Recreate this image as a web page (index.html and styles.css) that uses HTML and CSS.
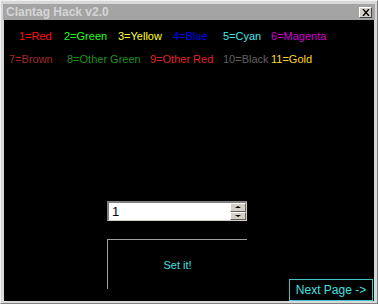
FILE: index.html
```html
<!DOCTYPE html>
<html lang="en">

<head>
    <meta charset="UTF-8">
    <title>Clantag Hack v2.0</title>
    <link rel="stylesheet" href="styles.css">
</head>

<body>
    <div class="window">
        <div class="title-bar">
            <span class="title">Clantag Hack v2.0</span>
            <span class="close-btn">
                <svg width="8" height="7" viewBox="0 0 8 7">
                    <path d="M1 0 L7 7 M7 0 L1 7" stroke="#000" stroke-width="1.4" />
                </svg>
            </span>
        </div>
        <div class="client">
            <div class="colors row-one">
                <span class="red">1=Red</span>
                <span class="green">2=Green</span>
                <span class="yellow">3=Yellow</span>
                <span class="blue">4=Blue</span>
                <span class="cyan">5=Cyan</span>
                <span class="magenta">6=Magenta</span>
            </div>
            <div class="colors row-two">
                <span class="brown">7=Brown</span>
                <span class="other-green">8=Other Green</span>
                <span class="other-red">9=Other Red</span>
                <span class="black">10=Black</span>
                <span class="gold">11=Gold</span>
            </div>

            <div class="spin-box">
                <span class="spin-value">1</span>
                <div class="spin-buttons">
                    <span class="spin-btn"><span class="arrow-up"></span></span>
                    <span class="spin-btn"><span class="arrow-down"></span></span>
                </div>
            </div>

            <div class="bottom-row">
                <div class="group-box">
                    <span class="set-it">Set it!</span>
                </div>
                <button class="next-btn">Next Page -&gt;</button>
            </div>
        </div>
    </div>
</body>

</html>
```

FILE: styles.css
```css
body {
    margin: 0;
    background-color: #d4d0c8;
    font-family: "Liberation Sans", Arial, sans-serif;
    font-size: 11px;
}

.window {
    width: 378px;
    height: 304px;
    box-sizing: border-box;
    padding: 3px 3px 2px 3px;
    background-color: #d8d8d8;
    border-top: 1px solid #f0f0f0;
    border-left: 1px solid #f0f0f0;
    border-right: 1px solid #808080;
    border-bottom: 1px solid #808080;
    display: flex;
    flex-direction: column;
}

.title-bar {
    height: 17px;
    margin-left: -1px;
    margin-right: -1px;
    background-color: #a4a4a4;
    display: flex;
    align-items: center;
    justify-content: space-between;
    padding: 0 3px 0 3px;
}

.title {
    color: #d4d4d4;
    font-weight: bold;
    font-size: 12px;
}

.close-btn {
    width: 13px;
    height: 11px;
    box-sizing: border-box;
    background-color: #d4d0c8;
    border-top: 1px solid #fff;
    border-left: 1px solid #fff;
    border-right: 1px solid #404040;
    border-bottom: 1px solid #404040;
    display: flex;
    align-items: center;
    justify-content: center;
}

.client {
    flex: 1;
    background-color: #000;
    display: flex;
    flex-direction: column;
}

.colors {
    display: grid;
    line-height: 13px;
    white-space: nowrap;
}

.row-one {
    margin-top: 10px;
    padding-left: 15px;
    grid-template-columns: 45px 54px 55px 50px 48px auto;
}

.row-two {
    margin-top: 10px;
    padding-left: 5px;
    grid-template-columns: 58px 83px 73px 48px auto;
}

.red { color: #ff1010; }
.green { color: #20ff20; }
.yellow { color: #ffff30; }
.blue { color: #0000ff; }
.cyan { color: #40e8e8; }
.magenta { color: #d000d0; }
.brown { color: #a02828; }
.other-green { color: #209020; }
.other-red { color: #e02424; }
.black { color: #606060; }
.gold { color: #ffd820; }

.spin-box {
    margin-top: 135px;
    margin-left: 103px;
    width: 140px;
    height: 20px;
    box-sizing: border-box;
    background-color: #fff;
    border-top: 2px solid #808080;
    border-left: 2px solid #808080;
    border-right: 1px solid #d4d0c8;
    border-bottom: 1px solid #d4d0c8;
    display: flex;
    align-items: center;
    justify-content: space-between;
}

.spin-value {
    padding-left: 3px;
    font-size: 13px;
    color: #000;
}

.spin-buttons {
    width: 16px;
    height: 17px;
    display: flex;
    flex-direction: column;
}

.spin-btn {
    flex: 1;
    background-color: #d4d0c8;
    border-top: 1px solid #fff;
    border-left: 1px solid #fff;
    border-right: 1px solid #606060;
    border-bottom: 1px solid #606060;
    display: flex;
    align-items: center;
    justify-content: center;
}

.arrow-up {
    border-left: 3px solid transparent;
    border-right: 3px solid transparent;
    border-bottom: 2px solid #000;
}

.arrow-down {
    border-left: 3px solid transparent;
    border-right: 3px solid transparent;
    border-top: 2px solid #000;
}

.bottom-row {
    margin-top: 18px;
    display: flex;
    align-items: flex-start;
}

.group-box {
    margin-left: 103px;
    width: 140px;
    height: 50px;
    box-sizing: border-box;
    border-top: 1px solid #a0a0a0;
    border-left: 1px solid #a0a0a0;
    display: flex;
    align-items: center;
    justify-content: center;
}

.set-it {
    color: #40e0e0;
}

.next-btn {
    margin-left: 42px;
    margin-top: 40px;
    width: 84px;
    height: 22px;
    padding: 0;
    background-color: #000;
    border: 1px solid #40c8c8;
    color: #40e0e0;
    font-family: "Liberation Sans", Arial, sans-serif;
    font-size: 12px;
}
```
